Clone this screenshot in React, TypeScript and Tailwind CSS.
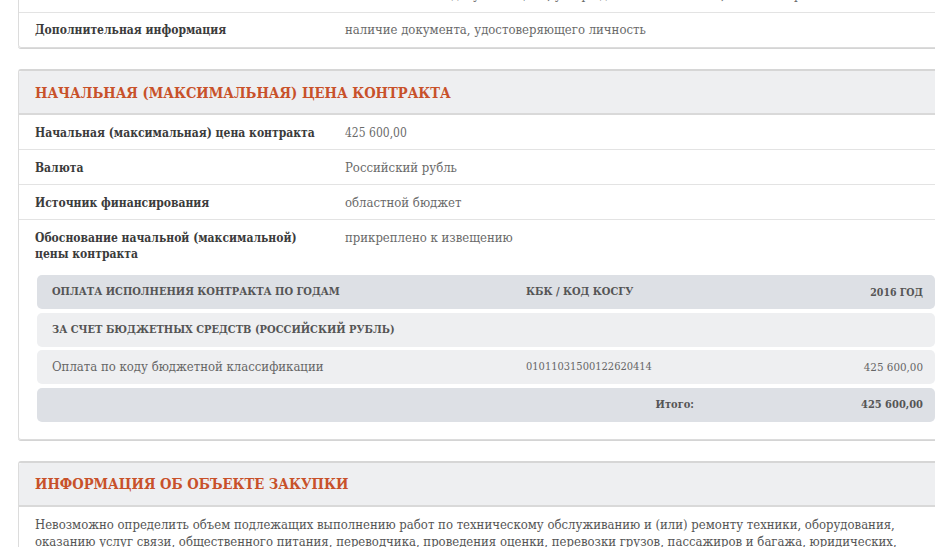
import * as React from 'react';

const rows = [
  { label: 'Начальная (максимальная) цена контракта', value: '425 600,00', num: true },
  { label: 'Валюта', value: 'Российский рубль' },
  { label: 'Источник финансирования', value: 'областной бюджет' },
  { label: 'Обоснование начальной (максимальной) цены контракта', value: 'прикреплено к извещению' },
];

function Row({ label, value, num, last }: { label: string; value: string; num?: boolean; last?: boolean }) {
  return (
    <div className={'flex px-[16px] pt-[10px] pb-[8px] ' + (last ? '' : 'border-b border-[#e3e3e3]')}>
      <div className="w-[310px] shrink-0 pr-4 text-[12px] font-bold text-[#3b3b3b]">{label}</div>
      <div className={'text-[#6a6a6a] ' + (num ? 'text-[12px]' : 'text-[13px]')}>{value}</div>
    </div>
  );
}

export default function App() {
  return (
    <div
      className="w-[935px] h-[547px] overflow-hidden bg-white text-[13px] leading-[16px]"
      style={{ fontFamily: '"DejaVu Serif Condensed", "DejaVu Serif", serif', fontStretch: 'condensed' }}
    >
      {/* previous card, scrolled off the top */}
      <div className="ml-[18px] mt-[-23px] w-[940px] rounded-[3px] border border-[#dcdcdc] shadow-[0_1px_0_#d4d4d4]">
        <div className="flex px-[16px] py-[9px] border-b border-[#e3e3e3]">
          <div className="w-[310px] shrink-0 pr-4 font-bold text-[#3b3b3b]">&nbsp;</div>
          <div className="text-[#6a6a6a] whitespace-nowrap">в соответствии с документацией, утвержденной заказчиком, согласно требованиям</div>
        </div>
        <div className="flex px-[16px] py-[9px]">
          <div className="w-[310px] shrink-0 pr-4 text-[12px] font-bold text-[#3b3b3b]">Дополнительная информация</div>
          <div className="text-[#6a6a6a]">наличие документа, удостоверяющего личность</div>
        </div>
      </div>

      {/* price card */}
      <div className="ml-[18px] mt-[21px] w-[940px] rounded-[3px] border border-[#dcdcdc] border-t-2 border-t-[#d6d6d6] shadow-[0_1px_0_#d4d4d4]">
        <div className="h-[44px] flex items-center px-[16px] pt-[1px] bg-[#eeeff1] border-b-2 border-[#d9d9d9] rounded-t-[3px]">
          <h2 className="text-[14.6px] font-bold text-[#c8512a] uppercase">Начальная (максимальная) цена контракта</h2>
        </div>
        {rows.map((r, i) => (
          <Row key={i} label={r.label} value={r.value} num={r.num} last={i === rows.length - 1} />
        ))}
        <div className="pl-[18px] pt-[5px] pb-[17px]">
          <div className="w-[898px] flex flex-col gap-[3.5px] text-[11px] text-[#555]">
            <div className="grid grid-cols-[474px_198px_1fr] h-[34px] items-center bg-[#dde0e5] rounded-[5px] font-bold uppercase">
              <div className="pl-[15px]">Оплата исполнения контракта по годам</div>
              <div className="pl-[15px]">КБК / Код КОСГУ</div>
              <div className="pr-[12px] text-right text-[10.5px]">2016 год</div>
            </div>
            <div className="grid grid-cols-[474px_198px_1fr] h-[34px] items-center bg-[#eeeff1] rounded-[5px] font-bold uppercase">
              <div className="pl-[15px] col-span-3">За счет бюджетных средств (Российский рубль)</div>
            </div>
            <div className="grid grid-cols-[474px_198px_1fr] h-[34px] items-center bg-[#eeeff1] rounded-[5px] text-[#666]">
              <div className="pl-[15px] text-[13px]">Оплата по коду бюджетной классификации</div>
              <div className="pl-[15px]">01011031500122620414</div>
              <div className="pr-[12px] text-right text-[11.5px]">425 600,00</div>
            </div>
            <div className="grid grid-cols-[474px_198px_1fr] h-[34px] items-center bg-[#dde0e5] rounded-[5px] font-bold">
              <div></div>
              <div className="pr-[15px] text-right">Итого:</div>
              <div className="pr-[12px] text-right">425 600,00</div>
            </div>
          </div>
        </div>
      </div>

      {/* purchase object card */}
      <div className="ml-[18px] mt-[21px] w-[940px] rounded-[3px] border border-[#dcdcdc] border-t-2 border-t-[#d6d6d6]">
        <div className="h-[44px] flex items-center px-[16px] pt-[1px] bg-[#eeeff1] border-b-2 border-[#d9d9d9] rounded-t-[3px]">
          <h2 className="text-[14.6px] font-bold text-[#c8512a] uppercase">Информация об объекте закупки</h2>
        </div>
        <div className="px-[16px] pt-[9px] leading-[17px] text-[#555] whitespace-nowrap">
          Невозможно определить объем подлежащих выполнению работ по техническому обслуживанию и (или) ремонту техники, оборудования,
          <br />
          оказанию услуг связи, общественного питания, переводчика, проведения оценки, перевозки грузов, пассажиров и багажа, юридических,
          <br />
          медицинских, образовательных услуг, гостиничного обслуживания
        </div>
      </div>
    </div>
  );
}
